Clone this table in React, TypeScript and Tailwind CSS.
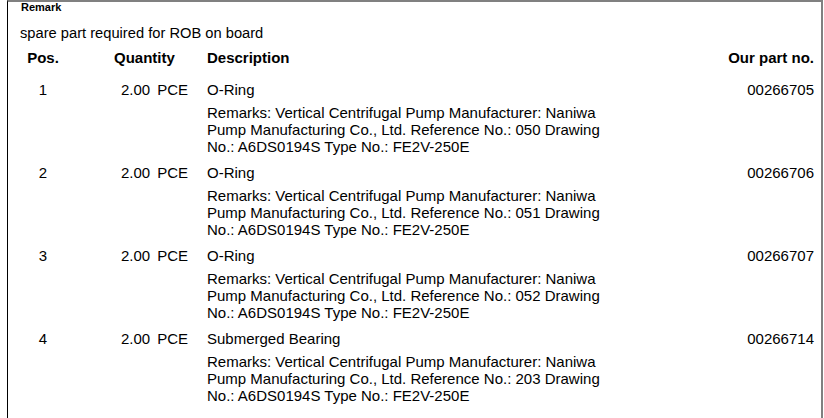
const items = [
  { pos: 1, qty: '2.00', unit: 'PCE', name: 'O-Ring', ref: '050', part: '00266705' },
  { pos: 2, qty: '2.00', unit: 'PCE', name: 'O-Ring', ref: '051', part: '00266706' },
  { pos: 3, qty: '2.00', unit: 'PCE', name: 'O-Ring', ref: '052', part: '00266707' },
  { pos: 4, qty: '2.00', unit: 'PCE', name: 'Submerged Bearing', ref: '203', part: '00266714' },
];

export default function App() {
  return (
    <div className="w-[824px] h-[418px] overflow-hidden bg-white text-black font-['Liberation_Sans',Arial,sans-serif]">
      <div className="ml-[7px] w-[816px] h-[418px] border-l border-l-black border-t-2 border-t-[#808080] border-r-2 border-r-[#808080] pl-[12px] pr-[7px]">
        <div className="text-[11px] leading-[11px] font-bold pl-px">Remark</div>
        <p className="mt-[12px] text-[14.7px] leading-[17px]">spare part required for ROB on board</p>

        <div className="mt-[7px] grid grid-cols-[46px_141px_1fr_auto] text-[15px] leading-[17px]">
          <div className="text-center font-bold">Pos.</div>
          <div className="pl-[48px] font-bold">Quantity</div>
          <div className="font-bold">Description</div>
          <div className="text-right font-bold">Our part no.</div>
        </div>

        <div className="mt-[15px] flex flex-col">
          {items.map((it) => (
            <div key={it.pos} className="grid grid-cols-[46px_141px_1fr_auto] text-[15px] leading-[17px] pb-[9px]">
              <div className="text-center">{it.pos}</div>
              <div className="text-right pr-[19px]">
                {it.qty}
                <span className="ml-[7px]">{it.unit}</span>
              </div>
              <div>
                <div>{it.name}</div>
                <div className="mt-[6px] whitespace-nowrap">
                  Remarks: Vertical Centrifugal Pump Manufacturer: Naniwa
                  <br />
                  Pump Manufacturing Co., Ltd. Reference No.: {it.ref} Drawing
                  <br />
                  No.: A6DS0194S Type No.: FE2V-250E
                </div>
              </div>
              <div className="text-right">{it.part}</div>
            </div>
          ))}
        </div>
      </div>
    </div>
  );
}
